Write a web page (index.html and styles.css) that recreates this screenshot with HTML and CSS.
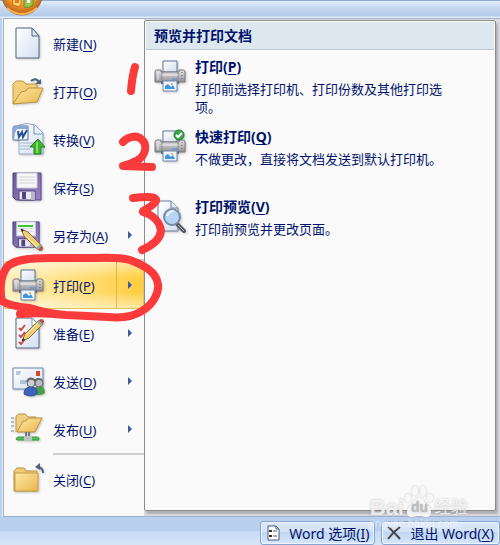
FILE: index.html
```html
<!DOCTYPE html>
<html lang="zh-CN">
<head>
  <meta charset="UTF-8" />
  <meta name="viewport" content="width=device-width, initial-scale=1.0"/>
  <title>预览并打印文档</title>
  <link rel="stylesheet" href="styles.css">
</head>
<body>
  <!-- shared gradients and the printer icon -->
  <svg class="defs" width="0" height="0" aria-hidden="true">
    <defs>
      <linearGradient id="paper" x1="0" y1="0" x2="1" y2="1">
        <stop offset="0" stop-color="#fff"/><stop offset="1" stop-color="#d3dff2"/>
      </linearGradient>
      <linearGradient id="folder" x1="0" y1="0" x2="1" y2="1">
        <stop offset="0" stop-color="#ffe9a6"/><stop offset="1" stop-color="#e8b64c"/>
      </linearGradient>
      <linearGradient id="metal" x1="0" y1="0" x2="0" y2="1">
        <stop offset="0" stop-color="#e6e6e8"/><stop offset=".5" stop-color="#bdbdc1"/><stop offset="1" stop-color="#8f8f94"/>
      </linearGradient>
      <linearGradient id="purple" x1="0" y1="0" x2="1" y2="1">
        <stop offset="0" stop-color="#6c5599"/><stop offset="1" stop-color="#9585c6"/>
      </linearGradient>
      <radialGradient id="orb" cx=".5" cy=".4" r=".6">
        <stop offset="0" stop-color="#ffe08a"/><stop offset=".6" stop-color="#f29a2e"/><stop offset="1" stop-color="#b85a10"/>
      </radialGradient>
    </defs>
    <symbol id="printer" viewBox="0 0 32 32">
      <path d="M9 1h14v11H9z" fill="url(#paper)" stroke="#5f7595"/>
      <path d="M1 12q0-2 2-2h4v2h18v-2h4q2 0 2 2v10H1z" fill="url(#metal)" stroke="#77777c"/>
      <path d="M8 11v11M24 11v11" stroke="#85858a"/>
      <path d="M8 15h16" stroke="#f1f1f3"/>
      <path d="M28 12v8" stroke="#55555a" stroke-dasharray="1 2"/>
      <path d="M4 12v8" stroke="#e9e9ec"/>
      <path d="M18 19h5" stroke="#4b8ff0"/>
      <path d="M7 21h18v3H7z" fill="#68686e"/>
      <path d="M9 21h14v10H9z" fill="#eef5fd" stroke="#6c86aa"/>
      <path d="M11 29v-3l3-2 3 3 2-2 2 4z" fill="#3e94dc"/>
      <circle cx="18" cy="24" r="1" fill="#f2903a"/>
    </symbol>
    <symbol id="floppy" viewBox="0 0 32 32">
      <path d="M1 2h28v27H4l-3-3z" fill="url(#purple)" stroke="#554382"/>
      <path d="M5 2h20v15H5z" fill="#f7f7f8" stroke="#c9c9d4"/>
      <path d="M7 6h16M7 9h16M7 12h16" stroke="#d3d3d8"/>
      <path d="M7 20h16v9H7z" fill="#e8e8ef" stroke="#51407c"/>
      <path d="M10 21h4v7h-4z" fill="#554382"/>
      <path d="M19 21h4v8h-4z" fill="#b9b4cc"/>
    </symbol>
    <symbol id="pencil" viewBox="0 0 24 24">
      <path d="M1 23l3-7L18 2l4 4L8 20z" fill="#f2cd77" stroke="#8a6a35"/>
      <path d="M5 17L19 3" stroke="#fff0b8"/>
      <path d="M16 4l2-2 4 4-2 2z" fill="#8eb0a4"/>
      <path d="M18 2l2-1q3 0 3 3l-1 2z" fill="#c54a47"/>
      <path d="M1 23l1-3 2 2z" fill="#222"/>
    </symbol>
  </svg>

  <div class="window">
    <header class="titlebar">
      <svg class="orb" width="44" height="17" viewBox="0 0 44 17" aria-hidden="true">
        <circle cx="22" cy="-5" r="20" fill="url(#orb)" stroke="#8c6a4a"/>
        <path d="M7 8q15 12 30 0" fill="none" stroke="#ffb552" stroke-width="2"/>
        <path d="M12-4h9v10q-4 1-8-1z" fill="#fbd766" stroke="#d8641a"/>
        <path d="M15 0h4v3h-4z" fill="#e0791f"/>
        <path d="M24-4h9v9q-4 4-9 2z" fill="#9cc44b" stroke="#5b9130"/>
        <path d="M27 0h3v3h-3z" fill="#fff"/>
      </svg>
    </header>

    <main class="office-menu">
      <nav class="commands">
        <button class="command">
          <svg class="icon" viewBox="0 0 32 32"><path d="M4 1h16l7 8v22H4z" fill="url(#paper)" stroke="#52647f"/><path d="M20 1v8h7z" fill="#dce8f7" stroke="#52647f"/></svg>
          <span>新建(<u>N</u>)</span>
        </button>
        <button class="command">
          <svg class="icon" viewBox="0 0 32 32"><path d="M1 29V9l3-3h7l3 3h11v6" fill="#f1cf7c" stroke="#c39a45"/><path d="M1 29L9 17l5-1 2-3h15l-6 14z" fill="url(#folder)" stroke="#bf8e36"/><path d="M19 6q5-4 8 1" fill="none" stroke="#4c627d" stroke-width="2"/><path d="M29 4v5h-6z" fill="#4c627d"/></svg>
          <span>打开(<u>O</u>)</span>
        </button>
        <button class="command">
          <svg class="icon" viewBox="0 0 32 32"><path d="M7 2q8-3 16 0l8 8v21H7z" fill="url(#paper)" stroke="#8fa6c6"/><path d="M22 2v9h9" fill="#e9f2fc" stroke="#7796bf"/><path d="M8 20h15M8 23h12M8 26h10" stroke="#9fb4d0"/><path d="M1 5q0-2 2-2h13v14H1z" fill="#f0f5fc" stroke="#496b9c"/><path d="M1 5q0-2 2-2h13v3H5q-2 2-3 11H1z" fill="#8ba9d2"/><path d="M6 8l1 6 3-5 1 5 4-7" fill="none" stroke="#294e91" stroke-width="2"/><path d="M26 16l7 8h-4v7h-7v-7h-4z" fill="#3db62b" stroke="#267f20"/><path d="M25 19v11" stroke="#82dd65" stroke-width="2"/></svg>
          <span>转换(<u>V</u>)</span>
        </button>
        <button class="command">
          <svg class="icon"><use href="#floppy"/></svg>
          <span>保存(<u>S</u>)</span>
        </button>
        <button class="command">
          <svg class="icon" viewBox="0 0 32 32"><use href="#floppy" width="30" height="32"/><path d="M6 7h15" stroke="#3cc63c" stroke-width="2"/><use href="#pencil" width="24" height="24" transform="matrix(1 0 0 -1 8 33)"/></svg>
          <span>另存为(<u>A</u>)</span>
          <i class="arrow"></i>
        </button>
        <hr class="rule">
        <button class="command active">
          <svg class="icon"><use href="#printer"/></svg>
          <span>打印(<u>P</u>)</span>
          <i class="arrow"></i>
        </button>
        <button class="command">
          <svg class="icon" viewBox="0 0 32 32"><path d="M4 1h16l7 7v23H4z" fill="url(#paper)" stroke="#52647f"/><path d="M20 1v8h7" fill="#fff" stroke="#8697b0"/><path d="M7 11l2 2 4-5M7 18l2 2 4-5M7 25l2 2 4-5" fill="none" stroke="#d04848" stroke-width="2"/><use href="#pencil" x="9" y="1" width="24" height="24"/></svg>
          <span>准备(<u>E</u>)</span>
          <i class="arrow"></i>
        </button>
        <button class="command">
          <svg class="icon" viewBox="0 0 32 32"><path d="M1 3h30v21H1z" fill="url(#paper)" stroke="#6884a9"/><path d="M4 7h5M4 9h4M8 16h8M8 18h6" stroke="#7897c1"/><path d="M24 6h4v5h-4z" fill="#de4422"/><path d="M21 29q0-8 6-8t6 7q-5 4-12 1z" fill="#47a247"/><circle cx="27" cy="18" r="4" fill="#b9bcc4" stroke="#666"/><path d="M23 17q1-5 7-2" fill="none" stroke="#666" stroke-width="2"/><path d="M12 29q0-7 7-7t6 7q-6 4-13 0z" fill="#3d65bb" stroke="#2d4b92"/><circle cx="19" cy="18" r="4" fill="#cbd0d8" stroke="#666"/><path d="M15 17q2-6 8-2" fill="none" stroke="#666" stroke-width="2"/></svg>
          <span>发送(<u>D</u>)</span>
          <i class="arrow"></i>
        </button>
        <button class="command">
          <svg class="icon" viewBox="0 0 32 32"><path d="M-1 5h3M-1 9h3M-1 13h3M-1 18h3" stroke="#6583ae"/><path d="M4 19V3l3-2h6l3 3h8v5" fill="#efd083" stroke="#bf943e"/><path d="M5 19l6-11h3l2-3h14l-7 14z" fill="url(#folder)" stroke="#bf8e36"/><path d="M14 19v6M17 19v6" stroke="#777" stroke-width="2"/><path d="M6 24h19q2 0 2 2t-2 1H6q-2 0-2-1t2-2z" fill="#59c45a" stroke="#329336"/><path d="M12 23h8v5h-8z" fill="#bfc3c8"/></svg>
          <span>发布(<u>U</u>)</span>
          <i class="arrow"></i>
        </button>
        <hr class="rule">
        <button class="command">
          <svg class="icon" viewBox="0 0 32 32"><path d="M2 28V8l3-3h7l2 3h11v20z" fill="#eecb75" stroke="#b89145"/><path d="M3 10h23v18H3z" fill="url(#folder)" stroke="#c59c49"/><path d="M25 4q6 0 6 6" fill="none" stroke="#4c627d" stroke-width="2"/><path d="M23 4l5-4v7z" fill="#4c627d"/></svg>
          <span>关闭(<u>C</u>)</span>
        </button>
      </nav>

      <div class="panel-area">
        <section class="panel">
          <h1 class="panel-title">预览并打印文档</h1>
          <button class="entry">
            <svg class="icon"><use href="#printer"/></svg>
            <span class="entry-text">
              <strong>打印(<u>P</u>)</strong>
              <span>打印前选择打印机、打印份数及其他打印选项。</span>
            </span>
          </button>
          <button class="entry">
            <svg class="icon" viewBox="0 0 32 32"><use href="#printer"/><circle cx="25" cy="5" r="5" fill="#3da646" stroke="#287a35"/><path d="M22 5l2 2 4-4" fill="none" stroke="#fff" stroke-width="2"/></svg>
            <span class="entry-text">
              <strong>快速打印(<u>Q</u>)</strong>
              <span>不做更改，直接将文档发送到默认打印机。</span>
            </span>
          </button>
          <button class="entry">
            <svg class="icon" viewBox="0 0 32 32"><path d="M4 1h13l7 7v23H4z" fill="url(#paper)" stroke="#6a7c99"/><path d="M17 1v7h7" fill="#e6effa" stroke="#6a7c99"/><path d="M23 24l7 7" stroke="#55585f" stroke-width="4" stroke-linecap="round"/><path d="M24 25l6 6" stroke="#b9bdc4" stroke-width="1"/><circle cx="18" cy="17" r="8" fill="#b4d5f5" stroke="#7a8ba3" stroke-width="2"/><path d="M13 16q2-5 7-5" fill="none" stroke="#eef7ff" stroke-width="2"/></svg>
            <span class="entry-text">
              <strong>打印预览(<u>V</u>)</strong>
              <span>打印前预览并更改页面。</span>
            </span>
          </button>
        </section>
      </div>
    </main>

    <footer class="footer">
      <button class="footer-button">
        <svg class="small-icon" viewBox="0 0 16 16"><path d="M3 1h8l3 3v11H3z" fill="#fff" stroke="#4b5c78"/><path d="M11 1v3h3M8 6h4M8 11h4" fill="none" stroke="#4b5c78"/><path d="M4 5h3v2H4zM4 10h3v2H4z" fill="#333"/></svg>
        <span>Word 选项(<u>I</u>)</span>
      </button>
      <button class="footer-button">
        <svg class="small-icon" viewBox="0 0 16 16"><path d="M2 2q5 4 12 12M14 2Q7 7 2 14" fill="none" stroke="#444" stroke-width="2"/></svg>
        <span>退出 Word(<u>X</u>)</span>
      </button>
    </footer>

    <div class="watermark">
      <div class="watermark-name">Bai<span class="paw"><svg width="30" height="32" viewBox="0 0 30 32" aria-hidden="true"><ellipse cx="4" cy="12" rx="3" ry="4"/><ellipse cx="11" cy="5" rx="3" ry="5"/><ellipse cx="19" cy="5" rx="3" ry="5"/><ellipse cx="26" cy="12" rx="3" ry="4"/><path d="M15 12q4 0 6 5 6 4 6 9 0 6-6 5-6-2-12 0-6 1-6-5 0-5 6-9 2-5 6-5z"/></svg><b>du</b></span><span class="watermark-cn">经验</span></div>
      <div class="watermark-url">jingyan.baidu.com</div>
    </div>

    <!-- hand-drawn step marks -->
    <svg class="marks" width="170" height="330" viewBox="0 0 170 330" aria-hidden="true">
      <path d="M135 67Q132 77 131 91"/>
      <path d="M123 142C126 138 136 134 141 139C148 144 146 155 138 160Q131 164 123 166L152 167"/>
      <path d="M133 198Q158 195 156 201C153 207 142 210 143 212C153 215 160 222 161 231C160 240 151 246 142 250"/>
      <path d="M20 314Q40 312 66 315L108 317Q130 319 142 311C154 304 159 292 158 284C156 271 143 265 130 260Q120 257 95 258H50C24 258 13 261 7 267C1 275-1 289 2 301Q9 306 30 308Q46 313 65 315"/>
    </svg>
  </div>
</body>
</html>
```
FILE: styles.css
```css
* {
  box-sizing: border-box;
}
body {
  margin: 0;
  background: #bdd1ec;
  color: #00126b;
  font-family: "Noto Sans", "Noto Sans CJK SC", sans-serif;
  font-size: 13px;
}
button {
  margin: 0;
  padding: 0;
  border: 0;
  background: none;
  color: inherit;
  font: inherit;
  text-align: left;
}
u {
  text-underline-offset: 2px;
}
.defs {
  position: absolute;
}
.window {
  position: relative;
  overflow: hidden;
}
.titlebar {
  height: 18px;
  border-top: 1px solid #8fa9cf;
  background: linear-gradient(#e3edfb, #ccdcf3 30%, #b4cbea 85%, #e6eefa);
}
.orb {
  position: absolute;
  left: 0;
  top: 0;
}

/* two-column menu */
.office-menu {
  display: grid;
  grid-template-columns: 140px 1fr;
  margin-left: 3px;
  border: 1px solid #a0b0cc;
  border-right: 0;
  background: #fafafa;
  box-shadow: 0 0 0 1px #e6eefa;
}
.commands {
  display: flex;
  flex-direction: column;
  padding-bottom: 13px;
}
.command {
  display: flex;
  align-items: center;
  gap: 9px;
  height: 48px;
  padding: 0 12px 0 8px;
  white-space: nowrap;
}
.icon {
  flex: none;
  width: 32px;
  height: 32px;
  overflow: visible;
  filter: drop-shadow(1px 1px 1px #0003);
}
.arrow {
  margin-left: auto;
  border: 4px solid transparent;
  border-left-color: #3f5a9e;
  border-right: 0;
}
.active {
  border: 1px solid #e5c365;
  padding: 0 11px 0 7px;
  border-radius: 2px;
  background:
    linear-gradient(#e0b849, #e0b849) right 26px top / 1px 100% no-repeat,
    linear-gradient(#fff8, #fff0 35%, #fff0 65%, #fff8),
    linear-gradient(90deg, #fff0bd, #ffdd73 60%, #ffcd3c);
}
.rule {
  width: 91px;
  height: 2px;
  margin: 0 0 0 auto;
  border: 0;
  background: #cfcfcf;
}
.panel-area {
  display: flex;
  padding: 1px 4px 5px 0;
  background: #dcdde3;
}
.panel {
  flex: 1;
  border: 1px solid #8c8c8c;
  border-radius: 2px;
  background: #fafafa;
  box-shadow: 2px 3px 2px #8888;
}
.panel-title {
  margin: 1px;
  padding: 0 8px;
  border-bottom: 1px solid #c2c6c9;
  background: #dde8ee;
  font-size: 14px;
  line-height: 27px;
}
.entry {
  display: flex;
  gap: 9px;
  width: 100%;
  min-height: 70px;
  padding: 5px 40px 0 9px;
}
.entry .icon {
  margin-top: 4px;
}
.entry-text {
  display: flex;
  flex-direction: column;
  gap: 2px;
  line-height: 18px;
}
.entry-text strong {
  font-size: 14px;
  line-height: 22px;
}

.footer {
  display: flex;
  justify-content: flex-end;
  gap: 6px;
  padding-top: 4px;
  background: linear-gradient(#b8cfee 14px, #c6daf5 14px, #d5e4f8);
}
.footer-button {
  display: flex;
  align-items: center;
  gap: 8px;
  height: 24px;
  padding: 0 5px 0 4px;
  border: 1px solid #87a5d2;
  border-radius: 3px;
  background: linear-gradient(#dce8f8, #d3e2f6 45%, #bfd5f1 45%, #d8e7fa);
  box-shadow: inset 0 0 0 1px #edf4fd;
  font-size: 14px;
  white-space: nowrap;
}
.small-icon {
  width: 16px;
  height: 16px;
}

/* overlays */
.watermark {
  position: absolute;
  right: 32px;
  bottom: 17px;
  color: #fffc;
  font-family: "Liberation Sans", "Noto Sans CJK SC", sans-serif;
  text-shadow: 0 0 2px #8889;
  pointer-events: none;
}
.watermark-name {
  display: flex;
  align-items: flex-end;
  font-size: 22px;
  font-weight: bold;
  line-height: 20px;
}
.watermark-cn {
  font-size: 17px;
  font-weight: normal;
}
.paw {
  position: relative;
  display: flex;
  fill: #fffd;
  filter: drop-shadow(0 0 1px #8889);
}
.paw b {
  position: absolute;
  left: 7px;
  bottom: 1px;
  color: #bbb;
  font-size: 14px;
}
.watermark-url {
  color: #fff8;
  font-size: 11px;
  line-height: 10px;
  text-shadow: none;
}
.marks {
  position: absolute;
  left: 0;
  top: 0;
  fill: none;
  stroke: #fb3b3b;
  stroke-width: 8;
  stroke-linecap: round;
  stroke-linejoin: round;
  pointer-events: none;
}
```
